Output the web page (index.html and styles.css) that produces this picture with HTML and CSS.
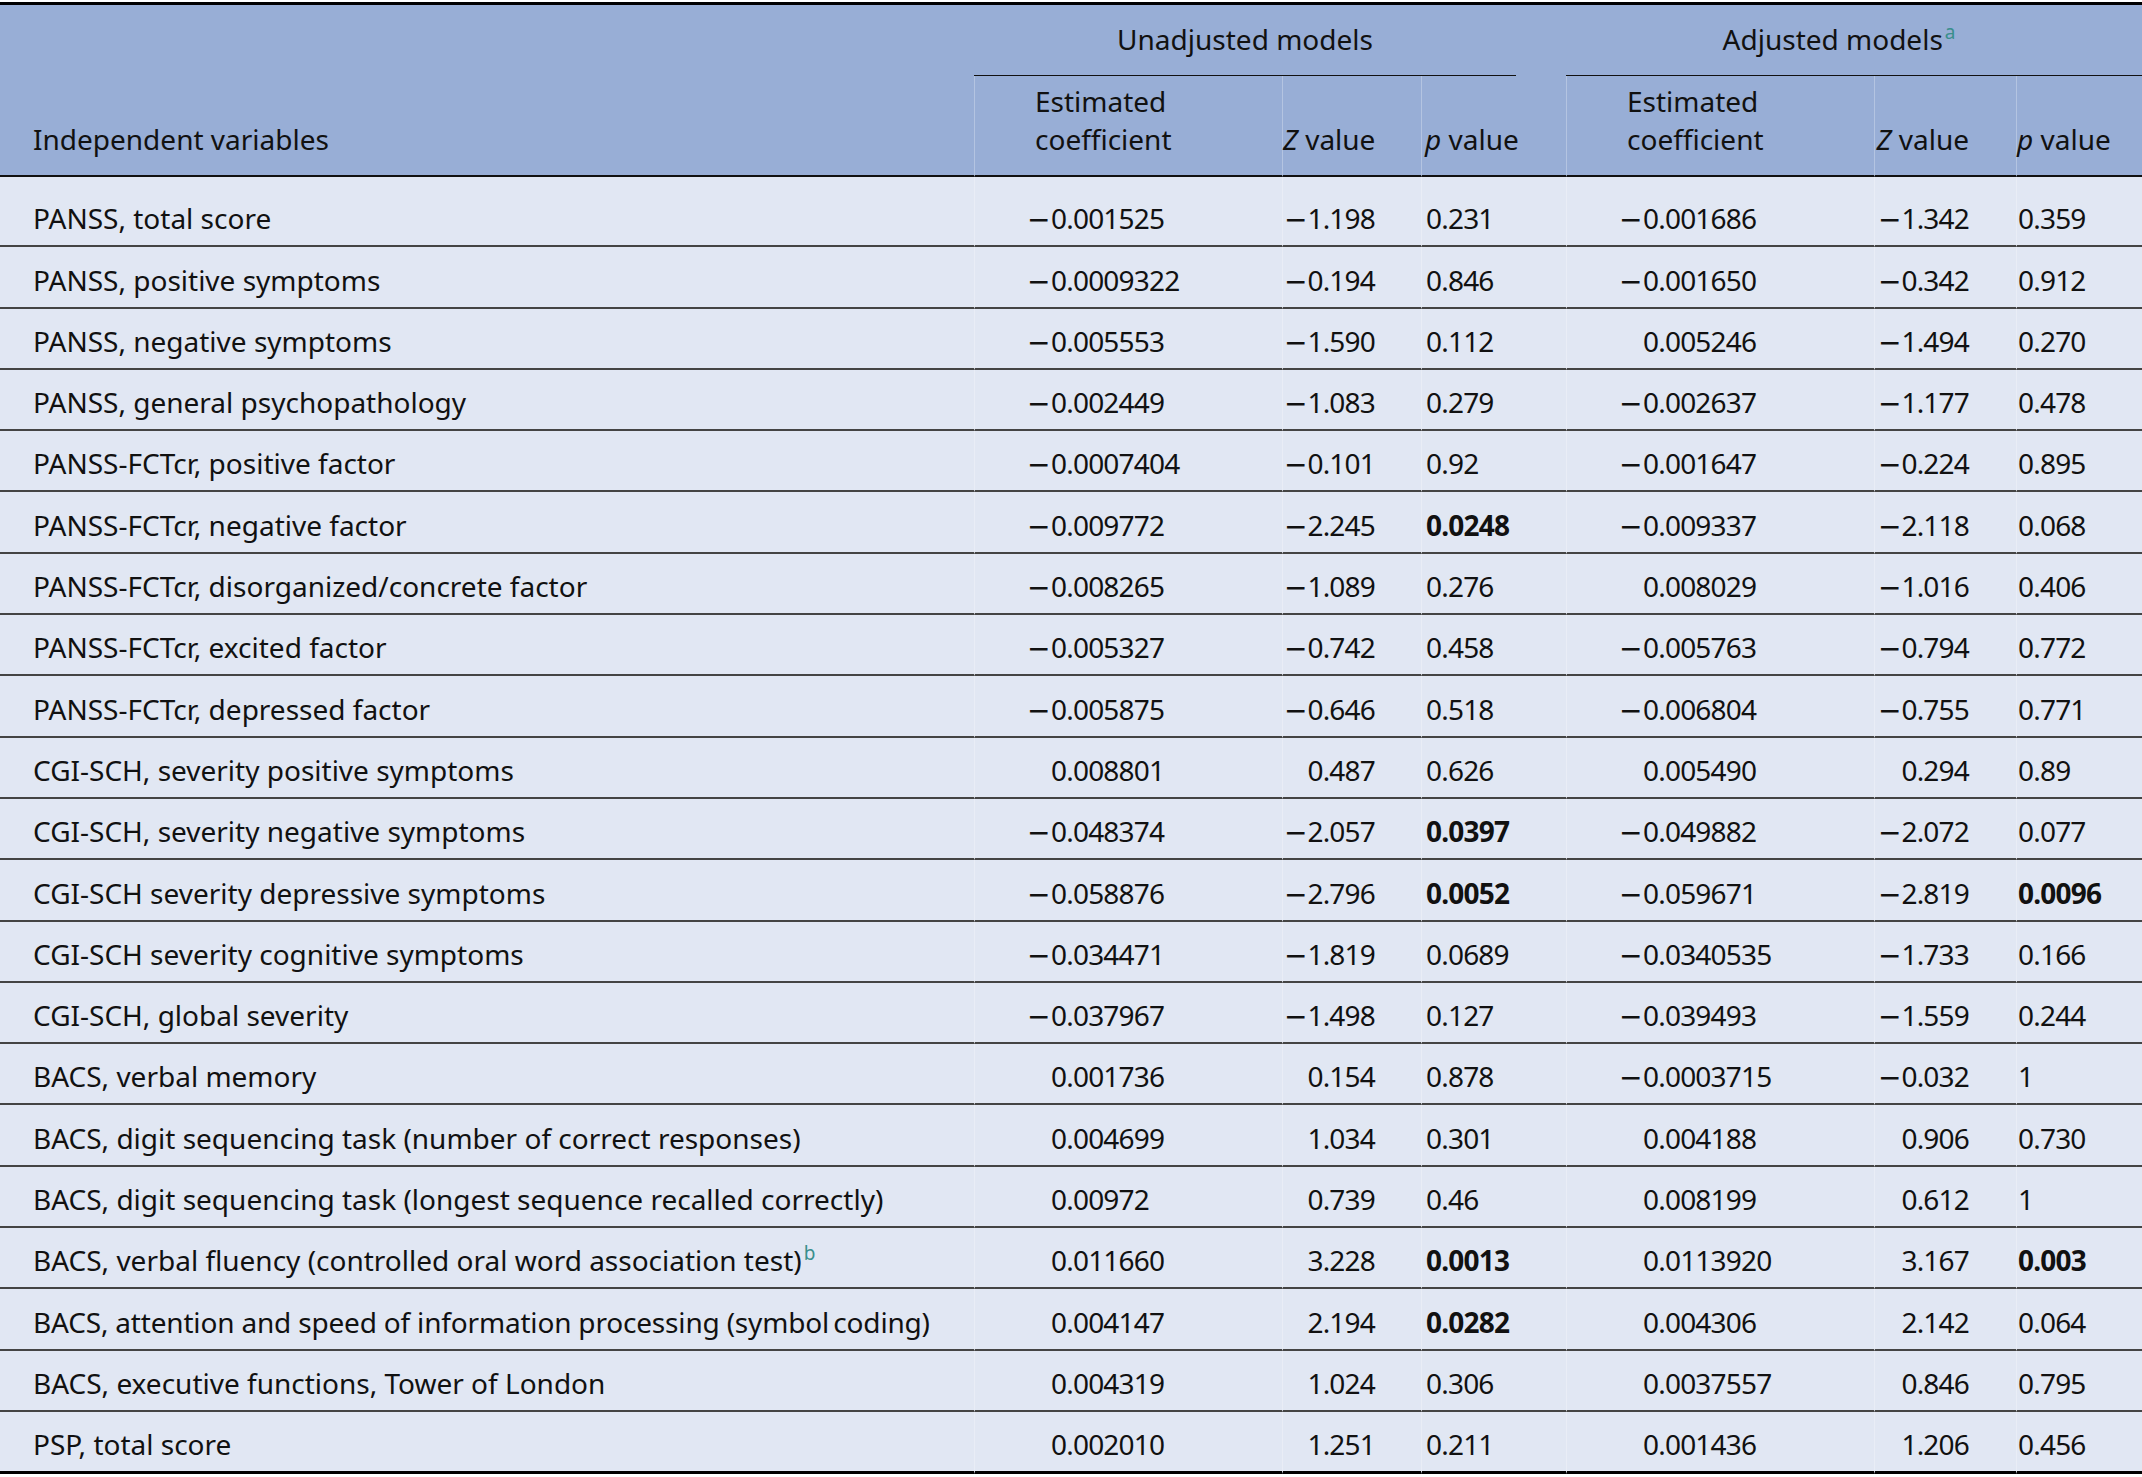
FILE: index.html
```html
<!DOCTYPE html>
<html lang="en">
<head>
<meta charset="utf-8">
<title>Regression table</title>
<link rel="stylesheet" href="styles.css">
</head>
<body>
<table class="tbl">
  <colgroup>
    <col class="w-var">
    <col class="w-coef">
    <col class="w-z1">
    <col class="w-p1">
    <col class="w-gap">
    <col class="w-coef">
    <col class="w-z2">
    <col class="w-p2">
  </colgroup>
  <thead>
    <tr class="hr1">
      <th class="h-var" rowspan="2">Independent variables</th>
      <th class="h-group h-unadj" colspan="3">Unadjusted models</th>
      <th class="h-gap"></th>
      <th class="h-group h-adj" colspan="3">Adjusted models<sup class="fn">a</sup></th>
    </tr>
    <tr class="hr2">
      <th class="h-coef vl">Estimated<br>coefficient</th>
      <th class="h-z vl"><i>Z</i> value</th>
      <th class="h-p vl"><i>p</i> value</th>
      <th class="h-gap2"></th>
      <th class="h-coef vl">Estimated<br>coefficient</th>
      <th class="h-z2 vl"><i>Z</i> value</th>
      <th class="h-p2 vl"><i>p</i> value</th>
    </tr>
  </thead>
  <tbody>
    <tr><td class="var">PANSS, total score</td><td class="coef vl"><span class="sg">−</span>0.001525</td><td class="z vl"><span class="mn">−</span>1.198</td><td class="p vl">0.231</td><td class="gap"></td><td class="coef vl"><span class="sg">−</span>0.001686</td><td class="z2 vl"><span class="mn">−</span>1.342</td><td class="p2 vl">0.359</td></tr>
    <tr><td class="var">PANSS, positive symptoms</td><td class="coef vl"><span class="sg">−</span>0.0009322</td><td class="z vl"><span class="mn">−</span>0.194</td><td class="p vl">0.846</td><td class="gap"></td><td class="coef vl"><span class="sg">−</span>0.001650</td><td class="z2 vl"><span class="mn">−</span>0.342</td><td class="p2 vl">0.912</td></tr>
    <tr><td class="var">PANSS, negative symptoms</td><td class="coef vl"><span class="sg">−</span>0.005553</td><td class="z vl"><span class="mn">−</span>1.590</td><td class="p vl">0.112</td><td class="gap"></td><td class="coef vl"><span class="sg"></span>0.005246</td><td class="z2 vl"><span class="mn">−</span>1.494</td><td class="p2 vl">0.270</td></tr>
    <tr><td class="var">PANSS, general psychopathology</td><td class="coef vl"><span class="sg">−</span>0.002449</td><td class="z vl"><span class="mn">−</span>1.083</td><td class="p vl">0.279</td><td class="gap"></td><td class="coef vl"><span class="sg">−</span>0.002637</td><td class="z2 vl"><span class="mn">−</span>1.177</td><td class="p2 vl">0.478</td></tr>
    <tr><td class="var">PANSS-FCTcr, positive factor</td><td class="coef vl"><span class="sg">−</span>0.0007404</td><td class="z vl"><span class="mn">−</span>0.101</td><td class="p vl">0.92</td><td class="gap"></td><td class="coef vl"><span class="sg">−</span>0.001647</td><td class="z2 vl"><span class="mn">−</span>0.224</td><td class="p2 vl">0.895</td></tr>
    <tr><td class="var">PANSS-FCTcr, negative factor</td><td class="coef vl"><span class="sg">−</span>0.009772</td><td class="z vl"><span class="mn">−</span>2.245</td><td class="p vl"><b>0.0248</b></td><td class="gap"></td><td class="coef vl"><span class="sg">−</span>0.009337</td><td class="z2 vl"><span class="mn">−</span>2.118</td><td class="p2 vl">0.068</td></tr>
    <tr><td class="var">PANSS-FCTcr, disorganized/concrete factor</td><td class="coef vl"><span class="sg">−</span>0.008265</td><td class="z vl"><span class="mn">−</span>1.089</td><td class="p vl">0.276</td><td class="gap"></td><td class="coef vl"><span class="sg"></span>0.008029</td><td class="z2 vl"><span class="mn">−</span>1.016</td><td class="p2 vl">0.406</td></tr>
    <tr><td class="var">PANSS-FCTcr, excited factor</td><td class="coef vl"><span class="sg">−</span>0.005327</td><td class="z vl"><span class="mn">−</span>0.742</td><td class="p vl">0.458</td><td class="gap"></td><td class="coef vl"><span class="sg">−</span>0.005763</td><td class="z2 vl"><span class="mn">−</span>0.794</td><td class="p2 vl">0.772</td></tr>
    <tr><td class="var">PANSS-FCTcr, depressed factor</td><td class="coef vl"><span class="sg">−</span>0.005875</td><td class="z vl"><span class="mn">−</span>0.646</td><td class="p vl">0.518</td><td class="gap"></td><td class="coef vl"><span class="sg">−</span>0.006804</td><td class="z2 vl"><span class="mn">−</span>0.755</td><td class="p2 vl">0.771</td></tr>
    <tr><td class="var">CGI-SCH, severity positive symptoms</td><td class="coef vl"><span class="sg"></span>0.008801</td><td class="z vl">0.487</td><td class="p vl">0.626</td><td class="gap"></td><td class="coef vl"><span class="sg"></span>0.005490</td><td class="z2 vl">0.294</td><td class="p2 vl">0.89</td></tr>
    <tr><td class="var">CGI-SCH, severity negative symptoms</td><td class="coef vl"><span class="sg">−</span>0.048374</td><td class="z vl"><span class="mn">−</span>2.057</td><td class="p vl"><b>0.0397</b></td><td class="gap"></td><td class="coef vl"><span class="sg">−</span>0.049882</td><td class="z2 vl"><span class="mn">−</span>2.072</td><td class="p2 vl">0.077</td></tr>
    <tr><td class="var">CGI-SCH severity depressive symptoms</td><td class="coef vl"><span class="sg">−</span>0.058876</td><td class="z vl"><span class="mn">−</span>2.796</td><td class="p vl"><b>0.0052</b></td><td class="gap"></td><td class="coef vl"><span class="sg">−</span>0.059671</td><td class="z2 vl"><span class="mn">−</span>2.819</td><td class="p2 vl"><b>0.0096</b></td></tr>
    <tr><td class="var">CGI-SCH severity cognitive symptoms</td><td class="coef vl"><span class="sg">−</span>0.034471</td><td class="z vl"><span class="mn">−</span>1.819</td><td class="p vl">0.0689</td><td class="gap"></td><td class="coef vl"><span class="sg">−</span>0.0340535</td><td class="z2 vl"><span class="mn">−</span>1.733</td><td class="p2 vl">0.166</td></tr>
    <tr><td class="var">CGI-SCH, global severity</td><td class="coef vl"><span class="sg">−</span>0.037967</td><td class="z vl"><span class="mn">−</span>1.498</td><td class="p vl">0.127</td><td class="gap"></td><td class="coef vl"><span class="sg">−</span>0.039493</td><td class="z2 vl"><span class="mn">−</span>1.559</td><td class="p2 vl">0.244</td></tr>
    <tr><td class="var">BACS, verbal memory</td><td class="coef vl"><span class="sg"></span>0.001736</td><td class="z vl">0.154</td><td class="p vl">0.878</td><td class="gap"></td><td class="coef vl"><span class="sg">−</span>0.0003715</td><td class="z2 vl"><span class="mn">−</span>0.032</td><td class="p2 vl">1</td></tr>
    <tr><td class="var">BACS, digit sequencing task (number of correct responses)</td><td class="coef vl"><span class="sg"></span>0.004699</td><td class="z vl">1.034</td><td class="p vl">0.301</td><td class="gap"></td><td class="coef vl"><span class="sg"></span>0.004188</td><td class="z2 vl">0.906</td><td class="p2 vl">0.730</td></tr>
    <tr><td class="var">BACS, digit sequencing task (longest sequence recalled correctly)</td><td class="coef vl"><span class="sg"></span>0.00972</td><td class="z vl">0.739</td><td class="p vl">0.46</td><td class="gap"></td><td class="coef vl"><span class="sg"></span>0.008199</td><td class="z2 vl">0.612</td><td class="p2 vl">1</td></tr>
    <tr><td class="var">BACS, verbal fluency (controlled oral word association test)<sup class="fn">b</sup></td><td class="coef vl"><span class="sg"></span>0.011660</td><td class="z vl">3.228</td><td class="p vl"><b>0.0013</b></td><td class="gap"></td><td class="coef vl"><span class="sg"></span>0.0113920</td><td class="z2 vl">3.167</td><td class="p2 vl"><b>0.003</b></td></tr>
    <tr><td class="var tight">BACS, attention and speed of information processing (symbol<span class="tsp"> </span>coding)</td><td class="coef vl"><span class="sg"></span>0.004147</td><td class="z vl">2.194</td><td class="p vl"><b>0.0282</b></td><td class="gap"></td><td class="coef vl"><span class="sg"></span>0.004306</td><td class="z2 vl">2.142</td><td class="p2 vl">0.064</td></tr>
    <tr><td class="var">BACS, executive functions, Tower of London</td><td class="coef vl"><span class="sg"></span>0.004319</td><td class="z vl">1.024</td><td class="p vl">0.306</td><td class="gap"></td><td class="coef vl"><span class="sg"></span>0.0037557</td><td class="z2 vl">0.846</td><td class="p2 vl">0.795</td></tr>
    <tr><td class="var">PSP, total score</td><td class="coef vl"><span class="sg"></span>0.002010</td><td class="z vl">1.251</td><td class="p vl">0.211</td><td class="gap"></td><td class="coef vl"><span class="sg"></span>0.001436</td><td class="z2 vl">1.206</td><td class="p2 vl">0.456</td></tr>
  </tbody>
</table>
</body>
</html>
```
FILE: styles.css
```css
html, body {
  margin: 0;
  padding: 0;
  background: #ffffff;
}
body {
  padding-top: 2px;
  font-family: "Noto Sans", "Open Sans", sans-serif;
  font-size: 28px;
  color: #111111;
}
.tbl {
  width: 2142px;
  table-layout: fixed;
  border-collapse: separate;
  border-spacing: 0;
  border-top: 3px solid #000000;
  line-height: 38px;
}
.w-var { width: 974px; }
.w-coef { width: 308px; }
.w-z1 { width: 139px; }
.w-p1 { width: 95px; }
.w-gap { width: 50px; }
.w-z2 { width: 142px; }
.w-p2 { width: 126px; }

th {
  font-weight: normal;
  background: #98aed6;
  vertical-align: bottom;
  padding: 0;
  white-space: nowrap;
}
.hr1 th {
  padding-top: 15px;
  padding-bottom: 17px;
}
.h-group {
  border-bottom: 1px solid #111111;
  text-align: center;
}
.h-adj {
  padding-right: 30px;
}
.hr2 th {
  padding-top: 6px;
  padding-bottom: 17px;
  border-bottom: 2px solid #111111;
  text-align: left;
}
.h-var {
  text-align: left;
  padding-left: 33px !important;
  padding-bottom: 17px;
  border-bottom: 2px solid #111111;
}
.hr2 .h-coef { padding-left: 60px; }
.hr2 .h-z, .hr2 .h-z2 { text-align: right; }
.hr2 .h-z { padding-right: 46px; }
.hr2 .h-z2 { padding-right: 47px; }
.hr2 .h-p { padding-left: 3px; }
.hr2 .h-p2 { padding-left: 0; }

.vl { border-left: 1px solid rgba(255, 255, 255, 0.28); }

td {
  background: #e1e7f3;
  padding: 13.3px 0 8px 0;
  border-bottom: 2px solid #444444;
  white-space: nowrap;
  vertical-align: bottom;
}
tbody tr:first-child td { padding-top: 22.3px; }
tbody tr:last-child td { border-bottom: 3px solid #000000; }

.var { padding-left: 33px; }
.tight { letter-spacing: -0.18px; }
.coef, .z, .z2, .p, .p2 { letter-spacing: -0.8px; }
.coef { padding-left: 52px; }
.sg {
  display: inline-block;
  width: 24px;
  line-height: 0;
  letter-spacing: 0;
  font-family: "DejaVu Sans", sans-serif;
}
.mn {
  line-height: 0;
  letter-spacing: 0;
  font-family: "DejaVu Sans", sans-serif;
}
.z { text-align: right; padding-right: 46px; }
.z2 { text-align: right; padding-right: 47px; }
.p { padding-left: 4px; }
.p2 { padding-left: 1px; }
.tsp { letter-spacing: -3px; }

b { font-weight: bold; }
i { font-style: italic; }

.fn {
  color: #3a8f8c;
  font-size: 19px;
  line-height: 0;
  vertical-align: 11px;
  margin-left: 2px;
}
```
